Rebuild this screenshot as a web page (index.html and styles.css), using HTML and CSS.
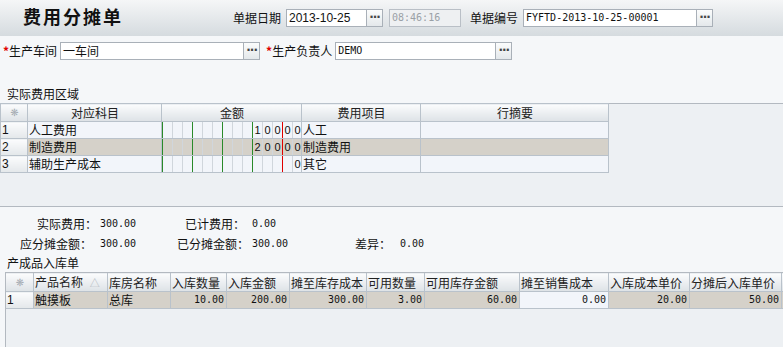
FILE: index.html
```html
<!DOCTYPE html>
<html lang="zh-CN">

<head>
    <meta charset="UTF-8">
    <title>费用分摊单</title>
    <link rel="stylesheet" href="styles.css">
</head>

<body>
    <div class="top-bar">
        <h1 class="title">费用分摊单</h1>
        <span class="label">单据日期</span>
        <div class="field w-date">
            <div class="input">2013-10-25</div>
            <div class="dots">···</div>
        </div>
        <div class="input time">08:46:16</div>
        <span class="label label-no">单据编号</span>
        <div class="field w-no">
            <div class="input mono">FYFTD-2013-10-25-00001</div>
            <div class="dots">···</div>
        </div>
    </div>

    <div class="form-row">
        <span class="label req">生产车间</span>
        <div class="field w-shop">
            <div class="input">一车间</div>
            <div class="dots">···</div>
        </div>
        <span class="label req req-2">生产负责人</span>
        <div class="field w-owner">
            <div class="input mono">DEMO</div>
            <div class="dots">···</div>
        </div>
    </div>

    <div class="section-title">实际费用区域</div>
    <div class="grid-area grid-area-top">
        <table class="grid">
            <colgroup>
                <col style="width:27px">
                <col style="width:134px">
                <col style="width:140px">
                <col style="width:119px">
                <col style="width:188px">
            </colgroup>
            <thead>
                <tr>
                    <th class="rh star">❋</th>
                    <th>对应科目</th>
                    <th>金额</th>
                    <th>费用项目</th>
                    <th>行摘要</th>
                </tr>
            </thead>
            <tbody id="expense-rows"></tbody>
        </table>
    </div>

    <div class="summary">
        <span class="s-label">实际费用：</span><span class="s-val">300.00</span>
        <span class="s-label">已计费用：</span><span class="s-val s-val-2">0.00</span>
        <span></span><span></span>

        <span class="s-label s-shift">应分摊金额：</span><span class="s-val">300.00</span>
        <span class="s-label">已分摊金额：</span><span class="s-val s-val-2">300.00</span>
        <span class="s-label">差异：</span><span class="s-val s-val-3">0.00</span>
    </div>

    <div class="section-title section-title-2">产成品入库单</div>
    <div class="grid-area grid-area-bottom">
        <table class="grid">
            <colgroup>
                <col style="width:28px">
                <col style="width:74px">
                <col style="width:63px">
                <col style="width:56px">
                <col style="width:63px">
                <col style="width:77px">
                <col style="width:58px">
                <col style="width:95px">
                <col style="width:89px">
                <col style="width:81px">
                <col style="width:92px">
                <col style="width:40px">
            </colgroup>
            <thead>
                <tr>
                    <th class="rh star">❋</th>
                    <th class="left">产品名称 <span class="sort">△</span></th>
                    <th class="left">库房名称</th>
                    <th class="left">入库数量</th>
                    <th class="left">入库金额</th>
                    <th class="left">摊至库存成本</th>
                    <th class="left">可用数量</th>
                    <th class="left">可用库存金额</th>
                    <th class="left">摊至销售成本</th>
                    <th class="left">入库成本单价</th>
                    <th class="left">分摊后入库单价</th>
                    <th></th>
                </tr>
            </thead>
            <tbody>
                <tr class="sel">
                    <td class="rh">1</td>
                    <td>触摸板</td>
                    <td>总库</td>
                    <td class="num">10.00</td>
                    <td class="num">200.00</td>
                    <td class="num">300.00</td>
                    <td class="num">3.00</td>
                    <td class="num">60.00</td>
                    <td class="num edit">0.00</td>
                    <td class="num">20.00</td>
                    <td class="num">50.00</td>
                    <td></td>
                </tr>
            </tbody>
        </table>
    </div>

    <script>
const rows = [
    { no: 1, subject: '人工费用', amount: '10000', item: '人工' },
    { no: 2, subject: '制造费用', amount: '20000', item: '制造费用', sel: true },
    { no: 3, subject: '辅助生产成本', amount: '0', item: '其它' }
];

function amountCells(digits) {
    let html = '';
    const padded = digits.padStart(14, ' ');
    for (let i = 0; i < 14; i++) {
        let cls = 'd';
        if (i === 0 || i === 3 || i === 6 || i === 9) cls += ' g';
        if (i === 12) cls += ' r';
        html += `<span class="${cls}">${padded[i].trim()}</span>`;
    }
    return `<div class="amount">${html}</div>`;
}

const body = document.getElementById('expense-rows');
rows.forEach(row => {
    const tr = document.createElement('tr');
    if (row.sel) tr.className = 'sel';
    tr.innerHTML = `<td class="rh">${row.no}</td>
        <td>${row.subject}</td>
        <td class="amt">${amountCells(row.amount)}</td>
        <td>${row.item}</td>
        <td></td>`;
    body.appendChild(tr);
});
    </script>
</body>

</html>
```

FILE: styles.css
```css
body {
    margin: 0;
    background-color: #f5f7f9;
    font-family: "Noto Sans CJK SC", "DejaVu Sans", sans-serif;
    font-size: 12px;
    color: #111;
    width: 783px;
    height: 347px;
    overflow: hidden;
}

.top-bar {
    height: 36px;
    display: flex;
    align-items: center;
    background: linear-gradient(#f5f6f7, #d5dbdf);
}

.title {
    margin: 0;
    width: 233px;
    padding-left: 23px;
    box-sizing: border-box;
    font-size: 18px;
    letter-spacing: 2px;
    font-weight: bold;
    line-height: 20px;
    margin-top: -4px;
}

.label {
    line-height: 18px;
    margin-right: 5px;
    white-space: nowrap;
}

.label-no {
    margin-left: 9px;
}

.field {
    display: flex;
    height: 18px;
}

.input {
    flex: 1;
    height: 18px;
    box-sizing: border-box;
    border: 1px solid #a9b0b8;
    background-color: #fff;
    padding-left: 2px;
    line-height: 16px;
    font-family: "Liberation Sans", "Noto Sans CJK SC", sans-serif;
    font-size: 11px;
    white-space: nowrap;
    overflow: hidden;
}

.field .input {
    font-family: "Noto Sans CJK SC", sans-serif;
    font-size: 12px;
}

.field .input.mono,
.input.mono {
    font-family: "DejaVu Sans Mono", monospace;
    font-size: 10px;
}

.w-date .input {
    font-family: "Liberation Sans", sans-serif;
    font-size: 12px;
}

.dots {
    width: 16px;
    height: 18px;
    box-sizing: border-box;
    border: 1px solid #a9b0b8;
    border-left: none;
    background: linear-gradient(#fbfcfc, #e4e8eb);
    text-align: center;
    font-size: 12px;
    font-weight: bold;
    line-height: 15px;
    color: #444;
    font-family: "DejaVu Sans", sans-serif;
    letter-spacing: -1px;
}

.w-date {
    width: 97px;
}

.time {
    flex: none;
    width: 72px;
    margin-left: 6px;
    background-color: #eef0f2;
    border-color: #b9bfc6;
    color: #9aa0a6;
    font-family: "DejaVu Sans Mono", monospace;
    font-size: 10px;
}

.w-no {
    width: 190px;
}

.form-row {
    display: flex;
    align-items: center;
    margin-top: 6px;
    padding-left: 3px;
}

.req::before {
    content: "*";
    color: #e00000;
    font-weight: bold;
}

.req {
    margin-right: 3px;
}

.req-2 {
    margin-left: 6px;
    margin-right: 3px;
}

.w-shop {
    width: 200px;
}

.w-owner {
    width: 177px;
}

.section-title {
    margin-top: 25px;
    height: 18px;
    line-height: 18px;
    padding-left: 7px;
}

.section-title-2 {
    margin-top: 0;
}

.grid-area {
    background-color: #edf0f3;
    border-top: 1px solid #b3b9c0;
}

.grid-area-top {
    height: 102px;
    border-bottom: 1px solid #b3b9c0;
}

.grid-area-bottom {
    margin-left: 5px;
    border-left: 1px solid #b3b9c0;
    height: 80px;
    overflow: hidden;
}

.grid {
    border-collapse: collapse;
    table-layout: fixed;
    width: 0;
}

.grid-area-top .grid {
    margin-top: -1px;
}

.grid-area-bottom .grid {
    margin-top: -1px;
    margin-left: -1px;
}

.grid th,
.grid td {
    border: 1px solid #b9c2cb;
    padding: 0 0 0 1px;
    white-space: nowrap;
    overflow: hidden;
    font-weight: normal;
    text-align: left;
}

.grid th {
    height: 17px;
    line-height: 17px;
    text-align: center;
    background: linear-gradient(#fbfcfd, #dde2e6);
    color: #222;
}

.grid th.left {
    text-align: left;
}

.grid td {
    height: 16px;
    line-height: 16px;
    background-color: #f2f5fa;
}

.grid tr.sel td {
    background-color: #d5d1c9;
}

.grid td.rh,
.grid tr.sel td.rh {
    background: linear-gradient(#fbfcfd, #e3e7ea);
    font-family: "Liberation Sans", sans-serif;
}

.grid th.star {
    color: #a6adb4;
    font-size: 10px;
    font-family: "DejaVu Sans", sans-serif;
}

.sort {
    color: #b4bac0;
    font-size: 10px;
    margin-left: 4px;
}

.grid td.num {
    text-align: right;
    padding-right: 2px;
    font-family: "DejaVu Sans Mono", monospace;
    font-size: 10px;
}

.grid tr.sel td.edit {
    background-color: #f2f5fa;
}

.grid td.amt {
    padding: 0;
}

.amount {
    display: flex;
    height: 16px;
}

.amount .d {
    width: 10px;
    flex: none;
    box-sizing: border-box;
    border-left: 1px solid #d0d6dc;
    text-align: center;
    font-family: "Liberation Sans", sans-serif;
    font-size: 11px;
    line-height: 16px;
}

.amount .g {
    border-left-color: #2a8a2a;
}

.amount .r {
    border-left-color: #e00000;
}

.summary {
    display: grid;
    grid-template-columns: 97px 80px 68px 110px 35px 60px;
    grid-auto-rows: 20px;
    align-items: center;
    padding-top: 6px;
    height: 47px;
    box-sizing: border-box;
}

.s-label {
    text-align: right;
    white-space: nowrap;
}

.s-shift {
    padding-right: 5px;
}

.s-val {
    padding-left: 3px;
    font-family: "DejaVu Sans Mono", monospace;
    font-size: 10px;
}

.s-val-2 {
    padding-left: 7px;
}

.s-val-3 {
    padding-left: 10px;
}
```
